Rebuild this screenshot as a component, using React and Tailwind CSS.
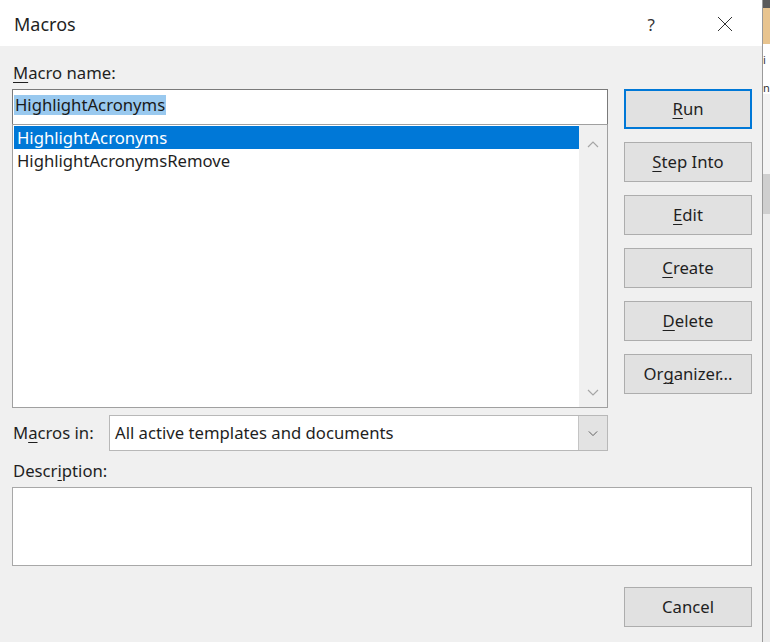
import React from "react";

const U = ({ children }) => (
  <span className="underline underline-offset-[3px] decoration-1">{children}</span>
);

const Btn = ({ children, primary }) => (
  <div
    className={
      "h-[40px] w-[128px] flex items-center justify-center text-[16.7px] bg-[#e1e1e1] " +
      (primary ? "border-2 border-[#0078d7]" : "border border-[#adadad]")
    }
  >
    {children}
  </div>
);

const Chevron = ({ up, color = "#a6a6a6", w = 12 }) => (
  <svg width={w} height="7" viewBox="0 0 12 7" fill="none">
    <path
      d={up ? "M1 6 L6 1 L11 6" : "M1 1 L6 6 L11 1"}
      stroke={color}
      strokeWidth="1.2"
    />
  </svg>
);

export default function App() {
  return (
    <div className="w-[770px] h-[642px] flex overflow-hidden bg-[#f0f0f0] text-[#1f1f1f] font-['Noto_Sans',sans-serif]">
      <div className="w-[763px] h-full flex flex-col border-r border-[#9a9a9a]">
        {/* title bar */}
        <div className="h-[46px] bg-white flex items-center pl-[14px] pr-[29px] pt-[2px] shrink-0">
          <div className="text-[18px] flex-1 leading-none">Macros</div>
          <div className="text-[17px] text-[#333] leading-none mr-[62px]">?</div>
          <svg width="16" height="16" viewBox="0 0 16 16">
            <path d="M1 1 L15 15 M15 1 L1 15" stroke="#333" strokeWidth="1" />
          </svg>
        </div>

        {/* body */}
        <div className="flex-1 flex flex-col pl-[12px] pr-[10px] pt-[14px]">
          <div className="flex gap-[16px]">
            {/* left column */}
            <div className="w-[596px] flex flex-col">
              <div className="h-[26px] leading-[26px] text-[16.7px] pl-[1px]">
                <U>M</U>acro name:
              </div>
              <div className="mt-[3px] h-[35px] bg-white border border-[#7a7a7a] border-b-0 flex items-center pl-[1px] pb-[4px]">
                <span className="bg-[#99c9ef] text-[16.7px] leading-[20px] px-[1px] text-[#1a1a1a]">
                  HighlightAcronyms
                </span>
              </div>
              <div className="h-[284px] bg-white border border-[#a0a0a0] flex">
                <div className="flex-1 flex flex-col pl-[1px] pt-[1px]">
                  <div className="h-[23px] bg-[#0078d7] text-white text-[16.7px] leading-[23px] pl-[3px]">
                    HighlightAcronyms
                  </div>
                  <div className="h-[23px] text-[16.7px] leading-[23px] pl-[3px]">
                    HighlightAcronymsRemove
                  </div>
                </div>
                <div className="w-[28px] bg-[#f0f0f0] flex flex-col items-center justify-between pt-[16px] pb-[11px]">
                  <Chevron up />
                  <Chevron />
                </div>
              </div>
              <div className="mt-[7px] h-[36px] flex items-center">
                <div className="w-[97px] text-[16.7px] pl-[1px]">
                  M<U>a</U>cros in:
                </div>
                <div className="flex-1 h-full bg-white border border-[#b8b8b8] flex items-center">
                  <div className="flex-1 pl-[5px] text-[16.7px]">All active templates and documents</div>
                  <div className="w-[29px] h-[34px] bg-[#e3e3e3] border-l border-[#c4c4c4] flex items-center justify-center">
                    <Chevron color="#606060" w={10} />
                  </div>
                </div>
              </div>
            </div>

            {/* right column */}
            <div className="w-[128px] pt-[29px] flex flex-col gap-[13px]">
              <Btn primary>
                <U>R</U>un
              </Btn>
              <Btn>
                <U>S</U>tep Into
              </Btn>
              <Btn>
                <U>E</U>dit
              </Btn>
              <Btn>
                <U>C</U>reate
              </Btn>
              <Btn>
                <U>D</U>elete
              </Btn>
              <Btn>
                Or<U>g</U>anizer...
              </Btn>
            </div>
          </div>

          <div className="mt-[7px] h-[26px] leading-[26px] text-[16.7px] pl-[1px]">
            Descr<U>i</U>ption:
          </div>
          <div className="mt-[3px] h-[79px] bg-white border border-[#a8a8a8]" />
          <div className="mt-[21px] flex justify-end">
            <Btn>Cancel</Btn>
          </div>
        </div>
      </div>

      {/* background app strip */}
      <div className="flex-1 flex flex-col bg-white">
        <div className="h-[8px] bg-[#5a5a5a]" />
        <div className="h-[36px] bg-[#e8c48f]" />
        <div className="h-[8px] bg-white" />
        <div className="h-[14px] bg-white flex items-center text-[11px] leading-none text-[#333] overflow-hidden">i</div>
        <div className="h-[14px] bg-white" />
        <div className="h-[14px] bg-white flex items-center text-[11px] leading-none text-[#333] overflow-hidden">n</div>
        <div className="h-[80px] bg-[#f4f4f4]" />
        <div className="h-[40px] bg-[#cfcfcf]" />
        <div className="flex-1 bg-[#ececec]" />
      </div>
    </div>
  );
}
